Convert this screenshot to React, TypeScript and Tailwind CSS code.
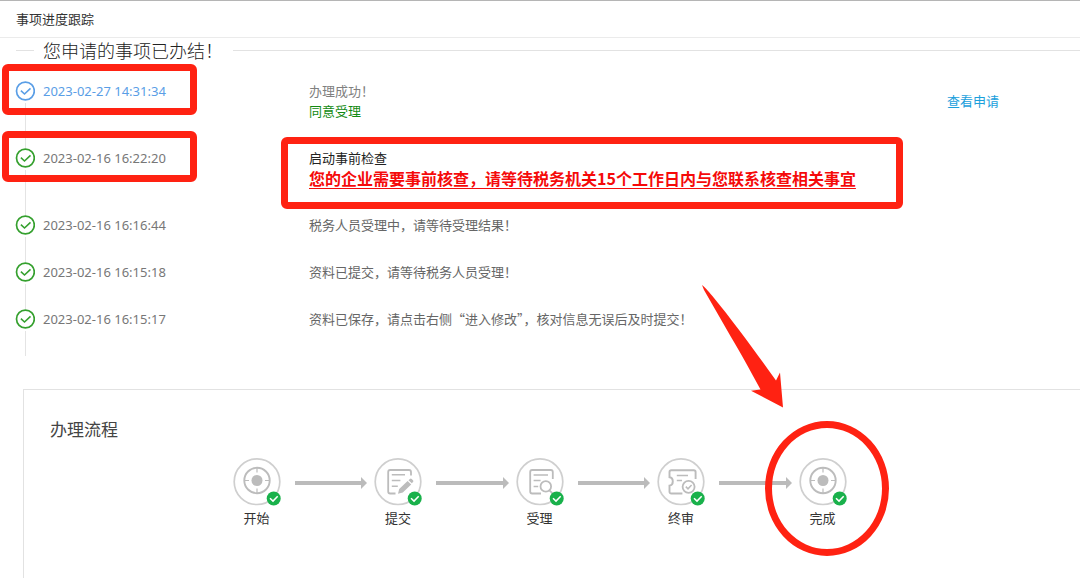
import type { ReactNode } from "react";

const MARK = "#ff2212";

function CheckCircle({ className }: { className: string }) {
  return (
    <svg viewBox="0 0 20 20" className={`size-5 shrink-0 ${className}`} fill="none" stroke="currentColor" aria-hidden="true">
      <circle cx="10.4" cy="10" r="8.9" strokeWidth="1.7" />
      <path d="M5.9 9.7 9.5 13l6-5.6" strokeWidth="1.6" />
    </svg>
  );
}

type Row = {
  time: string;
  current?: boolean;
  marked?: boolean;
  content: ReactNode;
  action?: string;
};

const rows: Row[] = [
  {
    time: "2023-02-27 14:31:34",
    current: true,
    marked: true,
    content: (
      <>
        <p className="text-[#808080]">办理成功！</p>
        <p className="text-[#128a12]">同意受理</p>
      </>
    ),
    action: "查看申请",
  },
  {
    time: "2023-02-16 16:22:20",
    marked: true,
    content: (
      <>
        <span className="absolute -left-7 -top-[11px] h-[72px] w-[622px] rounded-md border-[7px] border-[#ff2212]" />
        <p className="text-[#222]">启动事前检查</p>
        <p className="whitespace-nowrap text-base/5 font-bold text-[#f50a0a] underline decoration-1 underline-offset-3">
          您的企业需要事前核查，请等待税务机关15个工作日内与您联系核查相关事宜
        </p>
      </>
    ),
  },
  { time: "2023-02-16 16:16:44", content: <p>税务人员受理中，请等待受理结果！</p> },
  { time: "2023-02-16 16:15:18", content: <p>资料已提交，请等待税务人员受理！</p> },
  { time: "2023-02-16 16:15:17", content: <p>资料已保存，请点击右侧“进入修改”，核对信息无误后及时提交！</p> },
];

function TimelineRow({ row }: { row: Row }) {
  return (
    <li className="flex gap-2">
      <div className="relative flex flex-col items-center">
        <CheckCircle className={row.current ? "text-[#5a9ee6]" : "text-[#35a02e]"} />
        <span className="mt-0.5 w-px flex-1 bg-[#e4e4e4]" />
        {row.marked && (
          <span className="absolute -left-[13px] -top-[17px] h-[51px] w-[195px] rounded-md border-[7px] border-[#ff2212]" />
        )}
      </div>
      <div className="grid flex-1 grid-cols-[266px_1fr_133px] pb-[27px]">
        <time className={row.current ? "font-['Noto_Sans'] text-[#5a9ee6]" : "font-['Noto_Sans'] text-[#777]"}>{row.time}</time>
        <div className="relative text-[#666]">{row.content}</div>
        {row.action && (
          <a href="#application" className="self-center text-[#1ba0dc]">
            {row.action}
          </a>
        )}
      </div>
    </li>
  );
}

const target = (
  <>
    <circle cx="24" cy="22.5" r="12.7" strokeWidth="1.9" />
    <circle cx="24" cy="22.5" r="5.5" fill="currentColor" stroke="none" />
    <path d="M24 10v4.5M24 30.5V35M11.5 22.5H16M32 22.5h4.5" strokeWidth="1.2" />
  </>
);

const steps: { label: string; icon: ReactNode }[] = [
  { label: "开始", icon: target },
  {
    label: "提交",
    icon: (
      <>
        <path d="M37 17.5V14a2 2 0 0 0-2-2H16.2a2 2 0 0 0-2 2v19.5a2 2 0 0 0 2 2h5.3" strokeWidth="1.8" />
        <path d="M17.8 16.8H31M17.8 22.4h8.6M17.8 28.2h6" strokeWidth="1.5" />
        <path d="m24 35.8 1.2-4.8 8.4-8 3.6 3.6-8.4 8ZM34.5 22.2l1.4-1.2a1.3 1.3 0 0 1 1.8 0l1.3 1.3a1.3 1.3 0 0 1 0 1.8l-1.2 1.2Z" fill="currentColor" stroke="none" />
      </>
    ),
  },
  {
    label: "受理",
    icon: (
      <>
        <path d="M36.8 21V14a2 2 0 0 0-2-2H16.2a2 2 0 0 0-2 2v19.5a2 2 0 0 0 2 2H25" strokeWidth="1.8" />
        <path d="M17.6 17H32M17.6 22.6h7M17.6 28.4h4.6" strokeWidth="1.5" />
        <circle cx="29.8" cy="28.4" r="5.3" strokeWidth="1.8" />
        <path d="m33.4 32.3 3.4 3.4" strokeWidth="1.8" />
      </>
    ),
  },
  {
    label: "终审",
    icon: (
      <>
        <path d="M38.6 21V14a1.8 1.8 0 0 0-1.8-1.8H14.3a1.8 1.8 0 0 0-1.8 1.8v5.2c2 .3 3.3 2 3.3 4.2s-1.3 3.9-3.3 4.2v6.1a1.8 1.8 0 0 0 1.8 1.8h11.1" strokeWidth="1.9" />
        <path d="M19.8 17.4H31M19.8 22.6H25" strokeWidth="1.5" />
        <circle cx="31.6" cy="28.8" r="6" strokeWidth="1.8" />
        <path d="m28.8 28.6 2.2 2.2 3.6-3.8" strokeWidth="1.5" />
      </>
    ),
  },
  { label: "完成", icon: target },
];

function StepIcon({ children }: { children: ReactNode }) {
  return (
    <svg viewBox="0 0 48 48" className="size-12 text-[#bcbcbc]" fill="none" stroke="currentColor" aria-hidden="true">
      <circle cx="24" cy="23.7" r="22.8" stroke="#cfcfcf" strokeWidth="1.7" />
      {children}
      <circle cx="40.7" cy="40.5" r="7" fill="#19b14b" stroke="none" />
      <path d="m37 40.3 3 2.8 4.7-4.8" stroke="#fff" strokeWidth="1.5" />
    </svg>
  );
}

function StepArrow() {
  return (
    <div className="mr-[7px] ml-3.5 flex h-[50px] flex-1 items-center" aria-hidden="true">
      <span className="h-1 flex-1 bg-[#bbb]" />
      <svg viewBox="0 0 6 12" className="h-3 w-1.5" fill="#bbb">
        <path d="M0 0 6 6 0 12Z" />
      </svg>
    </div>
  );
}

function FinishMark() {
  return (
    <>
      <span className="absolute -left-[34px] -top-[37px] h-[135px] w-[124px] rounded-[50%] border-[7px] border-[#ff2212]" />
      <svg viewBox="0 0 82 124" className="absolute -left-[97px] -top-[173px] h-[124px] w-[82px]" fill={MARK} aria-hidden="true">
        <path d="M0 0C3 2 8 8 12 13 31 36 55 69 74 95.500L78 87.500 81 122.500 49 105.800 58.500 104.500C48 85 38 67 29 52L2 5Z" />
      </svg>
    </>
  );
}

export default function App() {
  return (
    <main
      lang="zh-CN"
      className="flex min-h-screen flex-col overflow-hidden border-t border-[#b5b5b5] bg-white font-['Noto_Sans_CJK_SC',sans-serif] text-[13px]/5 text-[#333]"
    >
      <header className="border-b border-[#ebebeb] px-4 py-2">
        <h1>事项进度跟踪</h1>
      </header>

      <section>
        <div className="flex items-center pl-4">
          <span className="mr-[9px] h-px w-[18px] bg-[#e2e2e2]" />
          <h2 className="text-[18px]/6 font-light text-[#222]">您申请的事项已办结！</h2>
          <span className="ml-2.5 h-px flex-1 bg-[#e2e2e2]" />
        </div>
        <ol className="pt-[19px] pl-[15px]">
          {rows.map((row) => (
            <TimelineRow key={row.time} row={row} />
          ))}
        </ol>
      </section>

      <section className="mt-[33px] ml-[23px] flex-1 border-t border-l border-[#e2e2e2] pr-[25px]">
        <h2 className="px-[26px] pt-[27px] text-[17px]/6 text-[#444]">办理流程</h2>
        <ol className="mx-auto mt-[17px] flex max-w-[614px]">
          {steps.map((step, i) => (
            <li key={step.label} className={i > 0 ? "flex flex-1" : "flex"}>
              {i > 0 && <StepArrow />}
              <div className="relative flex w-12 flex-col items-center">
                <StepIcon>{step.icon}</StepIcon>
                <span className="mt-0.5">{step.label}</span>
                {i === steps.length - 1 && <FinishMark />}
              </div>
            </li>
          ))}
        </ol>
      </section>
    </main>
  );
}
